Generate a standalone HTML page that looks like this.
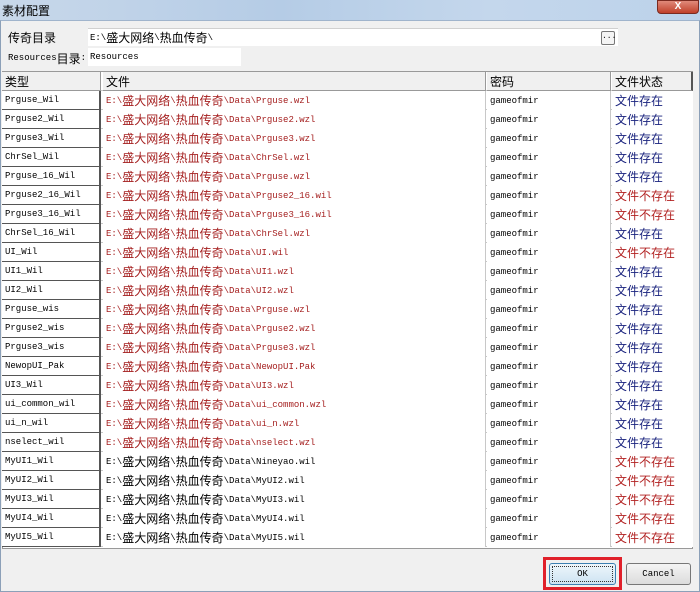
<!DOCTYPE html>
<html><head><meta charset="utf-8"><style>
*{margin:0;padding:0;box-sizing:border-box}
body{width:700px;height:592px;overflow:hidden;background:#f0f0f0;position:relative;font-family:"Liberation Mono","Noto Sans CJK SC",monospace;font-size:9px}
.abs{position:absolute}
.cjk{font-family:"Liberation Sans","Noto Sans CJK SC",sans-serif;font-size:12px}
#title{left:0;top:0;width:700px;height:20px;background:linear-gradient(90deg,#c8d8ea,#b5cce6 40%,#c4d7ec 70%,#bcd2ea)}
#close{left:657px;top:0;width:42px;height:14px;background:linear-gradient(#e08a7a,#c0402a);border:1px solid #7a2a20;border-radius:0 0 4px 4px;color:#fff;font:bold 10px "Liberation Sans",sans-serif;text-align:center;line-height:12px}
.row{position:absolute;left:2px;width:691px;height:19px;border-bottom:1px solid #c8c8c8}
.c{position:absolute;top:0;height:19px;padding-left:3px;white-space:nowrap;overflow:hidden;background:#fff;display:flex;align-items:center}
.c1{left:0;width:99px;border-right:2px solid #555;border-bottom:1px solid #555}
.c2{left:101px;width:383px;border-right:1px solid #c8c8c8}
.c3{left:485px;width:124px;border-right:1px solid #c8c8c8}
.c4{left:610px;width:81px}
.red{color:#a52020}.blue{color:#1a237e}.dred{color:#b22222}
.h .c{background:#f0f0f0;border-right:1px solid #999;border-bottom:1px solid #999}
.fl{display:flex;align-items:center}
</style></head><body>
<div id="title" class="abs"></div>
<div class="abs cjk" style="left:2px;top:2px;font-size:12px;color:#000">素材配置</div>
<div id="close" class="abs">X</div>
<div class="abs" style="left:0;top:20px;width:700px;height:572px;border:1px solid #8ca0b8;border-top:1px solid #a0b4cc"></div>
<div class="abs cjk" style="left:8px;top:29px">传奇目录</div>
<div class="abs fl" style="left:88px;top:28px;width:530px;height:18px;background:#fff;border-top:1px solid #d0d0d0;padding-left:2px">E:\<span class="cjk">盛大网络</span>\<span class="cjk">热血传奇</span>\</div>
<div class="abs" style="left:601px;top:31px;width:14px;height:14px;border:1px solid #777;border-radius:2px;background:#f4f4f4;font-size:8px;text-align:center;line-height:10px">...</div>
<div class="abs fl" style="left:8px;top:49px;height:18px">Resources<span class="cjk">目录</span>:</div>
<div class="abs fl" style="left:88px;top:48px;width:153px;height:18px;background:#fff;padding-left:2px">Resources</div>
<div class="abs" style="left:2px;top:71px;width:691px;height:478px;background:#fff;border:1px solid #999"></div>
<div class="row h" style="top:72px"><div class="c c1 cjk" style="border-right:1px solid #999">类型</div><div class="c c2 cjk">文件</div><div class="c c3 cjk">密码</div><div class="c c4 cjk" style="border-right:2px solid #555">文件状态</div></div>
<div id="rows"></div>
<script>
var d=[["Prguse_Wil","Prguse.wzl",1],["Prguse2_Wil","Prguse2.wzl",1],["Prguse3_Wil","Prguse3.wzl",1],["ChrSel_Wil","ChrSel.wzl",1],["Prguse_16_Wil","Prguse.wzl",1],["Prguse2_16_Wil","Prguse2_16.wil",0],["Prguse3_16_Wil","Prguse3_16.wil",0],["ChrSel_16_Wil","ChrSel.wzl",1],["UI_Wil","UI.wil",0],["UI1_Wil","UI1.wzl",1],["UI2_Wil","UI2.wzl",1],["Prguse_wis","Prguse.wzl",1],["Prguse2_wis","Prguse2.wzl",1],["Prguse3_wis","Prguse3.wzl",1],["NewopUI_Pak","NewopUI.Pak",1],["UI3_Wil","UI3.wzl",1],["ui_common_wil","ui_common.wzl",1],["ui_n_wil","ui_n.wzl",1],["nselect_wil","nselect.wzl",1],["MyUI1_Wil","Nineyao.wil",0,1],["MyUI2_Wil","MyUI2.wil",0,1],["MyUI3_Wil","MyUI3.wil",0,1],["MyUI4_Wil","MyUI4.wil",0,1],["MyUI5_Wil","MyUI5.wil",0,1]];
var h="";d.forEach(function(r,i){h+='<div class="row" style="top:'+(91+i*19)+'px"><div class="c c1">'+r[0]+'</div><div class="c c2 '+(r[3]?'':'red')+'">E:\\<span class="cjk">盛大网络</span>\\<span class="cjk">热血传奇</span>\\Data\\'+r[1]+'</div><div class="c c3">gameofmir</div><div class="c c4 cjk '+(r[2]?'blue':'dred')+'">'+(r[2]?'文件存在':'文件不存在')+'</div></div>'});
document.getElementById('rows').innerHTML=h;
</script>
<div class="abs" style="left:543px;top:557px;width:79px;height:33px;border:3px solid #e0202a"></div>
<div class="abs" style="left:549px;top:563px;width:67px;height:22px;border:1px solid #3c7fb1;border-radius:3px;background:linear-gradient(#eef6fb,#cde3f2);text-align:center;line-height:20px;outline:1px dotted #333;outline-offset:-4px">OK</div>
<div class="abs" style="left:626px;top:563px;width:65px;height:22px;border:1px solid #777;border-radius:3px;background:linear-gradient(#f4f4f4,#dcdcdc);text-align:center;line-height:20px">Cancel</div>
</body></html>
